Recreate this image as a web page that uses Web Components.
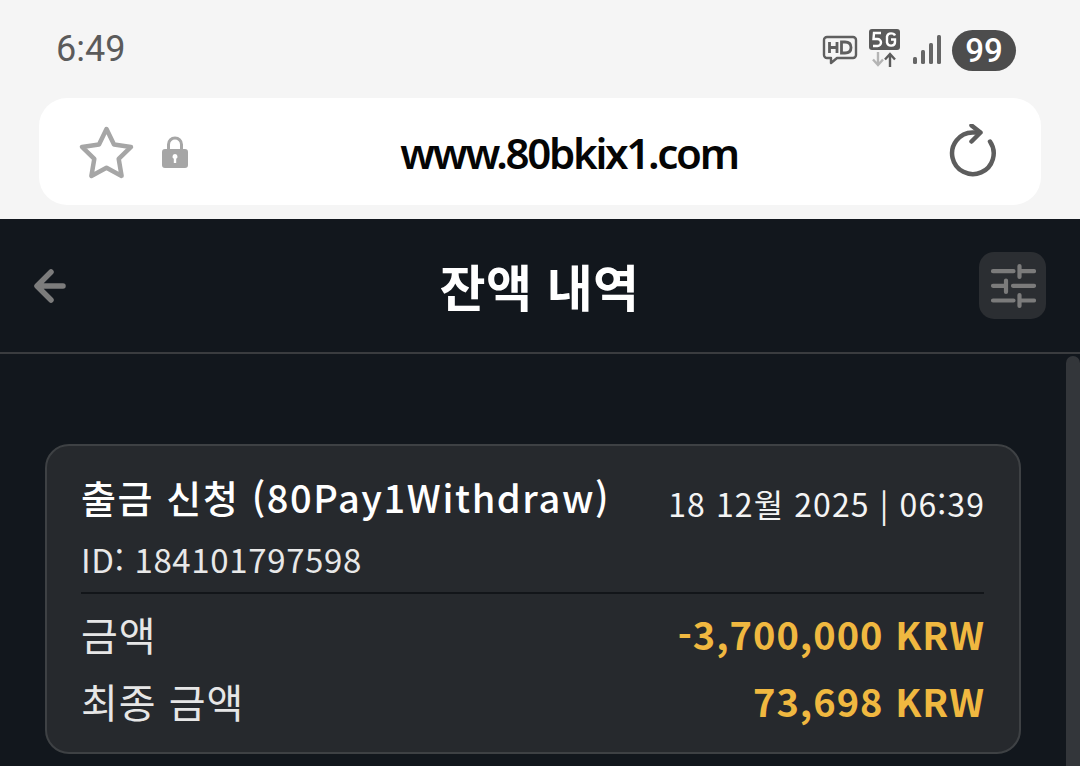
<!DOCTYPE html>
<html lang="ko">
<head>
<meta charset="utf-8">
<title>잔액 내역</title>
<style>
html, body { margin: 0; height: 100%; overflow: hidden; background: #12171d; }
body { font-family: "Noto Sans CJK KR", "Noto Sans", sans-serif; }
</style>
</head>
<body>
<browser-chrome url="www.80bkix1.com"></browser-chrome>
<page-header title="잔액 내역"></page-header>
<history-list>
    <history-card title="출금 신청 (80Pay1Withdraw)" date="18 12월 2025 | 06:39" txid="ID: 184101797598">
        <amount-row label="금액" value="-3,700,000 KRW"></amount-row>
        <amount-row label="최종 금액" value="73,698 KRW"></amount-row>
    </history-card>
</history-list>

<script>
(function () {
    class BrowserChrome extends HTMLElement {
        constructor() {
            super();
            this.attachShadow({mode: "open"}).innerHTML = `<style>
    :host { display: block; background: #f5f5f5; height: 219px; box-sizing: border-box; padding: 0 39px 14px; }
    .status { height: 98px; display: flex; align-items: center; justify-content: space-between; padding: 0 25px 0 17px; box-sizing: border-box; }
    .time { font: 400 36px/1 "Roboto", "Noto Sans", sans-serif; color: #5b5b5b; }
    .icons { display: flex; align-items: center; position: relative; top: 1px; }
    .battery { width: 64px; height: 41px; border-radius: 21px; background: #4d4d4d; color: #fff; font: 500 33px/41px "Roboto", sans-serif; text-align: center; margin-left: 11px; }
    .bar { height: 107px; background: #fff; border-radius: 28px; display: flex; align-items: center; padding: 0 42px 0 39px; }
    .url { flex: 1; text-align: center; font: 600 42px/1 "Noto Sans", sans-serif; color: #050505; letter-spacing: -2.3px; position: relative; top: 1px; }
    svg { display: block; }
</style>
<div class="status">
    <span class="time">6:49</span>
    <div class="icons">
        <svg width="36" height="30" viewBox="0 0 36 30" fill="none" stroke="#5f5f5f">
            <path d="M5 2h26a3 3 0 0 1 3 3v15a3 3 0 0 1-3 3H15l-6 5v-5H5a3 3 0 0 1-3-3V5a3 3 0 0 1 3-3z" stroke-width="2.4" stroke-linejoin="round"/>
            <path d="M7.5 7v11M15 7v11M7.5 12.5H15M19.500 7v11h3.500c3.500 0 6-1.800 6-5.500S26.500 7 23 7z" stroke-width="2.800"/>
        </svg>
        <svg width="32" height="38" viewBox="0 0 32 38" fill="none" style="margin-left:10px;margin-top:-4px">
            <rect x="1" y="0" width="31" height="21" rx="3" fill="#5b5b5b"/>
            <path d="M13 4H6L5.500 10h4a3.200 3.200 0 0 1 0 7H5M27 6.500C26 4 20 3 19 7.500v6c1 4.500 8 4 8-.5v-2.500h-4" stroke="#fff" stroke-width="2.400"/>
            <path d="M10 23v13M5 30.500l5 5.500 5-5.500" stroke="#b4b4b4" stroke-width="2.400"/>
            <path d="M22 38V25M17 30.500l5-5.500 5 5.500" stroke="#5b5b5b" stroke-width="2.400"/>
        </svg>
        <svg width="28" height="30" viewBox="0 0 28 30" fill="#666" style="margin-left:13px">
            <rect x="0" y="22" width="4" height="7" rx="1.500"/>
            <rect x="8" y="15" width="4" height="14" rx="1.500"/>
            <rect x="16" y="8" width="4" height="21" rx="1.500"/>
            <rect x="24" y="0" width="4" height="29" rx="1.500"/>
        </svg>
        <div class="battery">99</div>
    </div>
</div>
<div class="bar">
    <svg width="58" height="56" viewBox="0 0 58 56" fill="none" stroke="#a6a6a6" stroke-width="4.500" stroke-linejoin="round">
        <path d="M28.500 5l7.500 15.500 17 2.400-12.300 12 2.900 17L28.500 43.800 13.400 51.900l2.900-17L4 22.900l17-2.400z"/>
    </svg>
    <svg width="28" height="36" viewBox="0 0 28 36" style="margin-left:25px">
        <path d="M7.500 17v-6.500a6.500 6.500 0 0 1 13 0V17" fill="none" stroke="#a6a6a6" stroke-width="3"/>
        <path fill-rule="evenodd" fill="#a6a6a6" d="M4 15h20a3 3 0 0 1 3 3v13a3 3 0 0 1-3 3H4a3 3 0 0 1-3-3V18a3 3 0 0 1 3-3zm10 5a2.500 2.500 0 0 0-1.200 4.700V29h2.400v-4.300A2.500 2.500 0 0 0 14 20z"/>
    </svg>
    <span class="url"></span>
    <svg width="50" height="56" viewBox="0 0 50 56" fill="none" stroke="#5d5d5d" stroke-width="4.500" stroke-linecap="round" stroke-linejoin="round">
        <path d="M41 17.500A20.800 20.800 0 1 1 23.500 8.500h7"/>
        <path d="M22.500 1.500l9 7-9 9"/>
    </svg>
</div>`;
            this.shadowRoot.querySelector(".url").textContent = this.getAttribute("url");
        }
    }

    class PageHeader extends HTMLElement {
        constructor() {
            super();
            this.attachShadow({mode: "open"}).innerHTML = `<style>
    :host { display: block; height: 135px; box-sizing: border-box; border-bottom: 2px solid #3a3c3f; background: #12171d; }
    .row { height: 133px; display: flex; align-items: center; justify-content: space-between; padding: 0 34px 0 32px; }
    h1 { margin: 0; font: 700 50px/1 "Noto Sans CJK KR", sans-serif; color: #fff; position: relative; top: -1px; left: 16px; letter-spacing: 0.4px; }
    .filter { width: 67px; height: 67px; border-radius: 15px; background: #2b2e32; display: flex; align-items: center; justify-content: center; }
    svg { display: block; }
</style>
<div class="row">
    <svg width="36" height="36" viewBox="0 0 36 36" fill="none" stroke="#7c7c7c" stroke-width="5.500" stroke-linecap="round" stroke-linejoin="round">
        <path d="M31 18H6M19 4L5 18l14 14"/>
    </svg>
    <h1></h1>
    <div class="filter">
        <svg width="46" height="46" viewBox="0 0 46 46" fill="none" stroke="#7b7b7b" stroke-width="4.200" stroke-linecap="round">
            <path d="M3 8.200h20.500M29.500 3v11M29.500 8.200H44M3 22.800h11M16 17.500V29M23 22.800h21M3 37.500h20.500M29.500 32v11M29.500 37.500H44"/>
        </svg>
    </div>
</div>`;
            this.shadowRoot.querySelector("h1").textContent = this.getAttribute("title");
        }
    }

    class HistoryList extends HTMLElement {
        constructor() {
            super();
            this.attachShadow({mode: "open"}).innerHTML = `<style>
    :host { display: block; position: relative; padding: 90px 59px 0 45px; }
    .thumb { position: absolute; right: 0; top: 2px; width: 14px; height: 420px; background: #33363a; border-radius: 7px 7px 0 0; }
</style>
<div class="thumb"></div>
<slot></slot>`;
        }
    }

    class HistoryCard extends HTMLElement {
        constructor() {
            super();
            this.attachShadow({mode: "open"}).innerHTML = `<style>
    :host { display: block; box-sizing: border-box; height: 310px; background: #26292d; border: 2px solid #3e4144; border-radius: 24px; padding: 24px 35px 0 34px; color: #fff; }
    .top { display: flex; justify-content: space-between; align-items: center; height: 62px; }
    .title { font: 500 38px/1.2 "Noto Sans CJK KR", sans-serif; letter-spacing: 1.6px; position: relative; top: -4px; }
    .date { font: 400 32px/1.2 "Noto Sans CJK KR", sans-serif; letter-spacing: 1.1px; margin-right: -1px; color: #f4f4f4; position: relative; top: 2px; }
    .txid { font: 400 33px/1.2 "Noto Sans CJK KR", sans-serif; letter-spacing: 0.65px; color: #e8e8e8; height: 60px; border-bottom: 2px solid #121519; }
    .txid span { position: relative; top: 8px; }
    .rows { padding-top: 6px; }
</style>
<div class="top"><span class="title"></span><span class="date"></span></div>
<div class="txid"><span></span></div>
<div class="rows"><slot></slot></div>`;
            this.shadowRoot.querySelector(".title").textContent = this.getAttribute("title");
            this.shadowRoot.querySelector(".date").textContent = this.getAttribute("date");
            this.shadowRoot.querySelector(".txid span").textContent = this.getAttribute("txid");
        }
    }

    class AmountRow extends HTMLElement {
        constructor() {
            super();
            this.attachShadow({mode: "open"}).innerHTML = `<style>
    :host { display: flex; justify-content: space-between; align-items: center; height: 67px; }
    .label { font: 400 40px/1 "Noto Sans CJK KR", sans-serif; letter-spacing: 1px; color: #e6e6e6; }
    .value { font: 700 38px/1 "Noto Sans CJK KR", sans-serif; letter-spacing: 1px; margin-right: -1px; color: #f0b840; }
</style>
<span class="label"></span><span class="value"></span>`;
            this.shadowRoot.querySelector(".label").textContent = this.getAttribute("label");
            this.shadowRoot.querySelector(".value").textContent = this.getAttribute("value");
        }
    }

    customElements.define("browser-chrome", BrowserChrome);
    customElements.define("page-header", PageHeader);
    customElements.define("history-list", HistoryList);
    customElements.define("history-card", HistoryCard);
    customElements.define("amount-row", AmountRow);
})();
</script>
</body>
</html>
